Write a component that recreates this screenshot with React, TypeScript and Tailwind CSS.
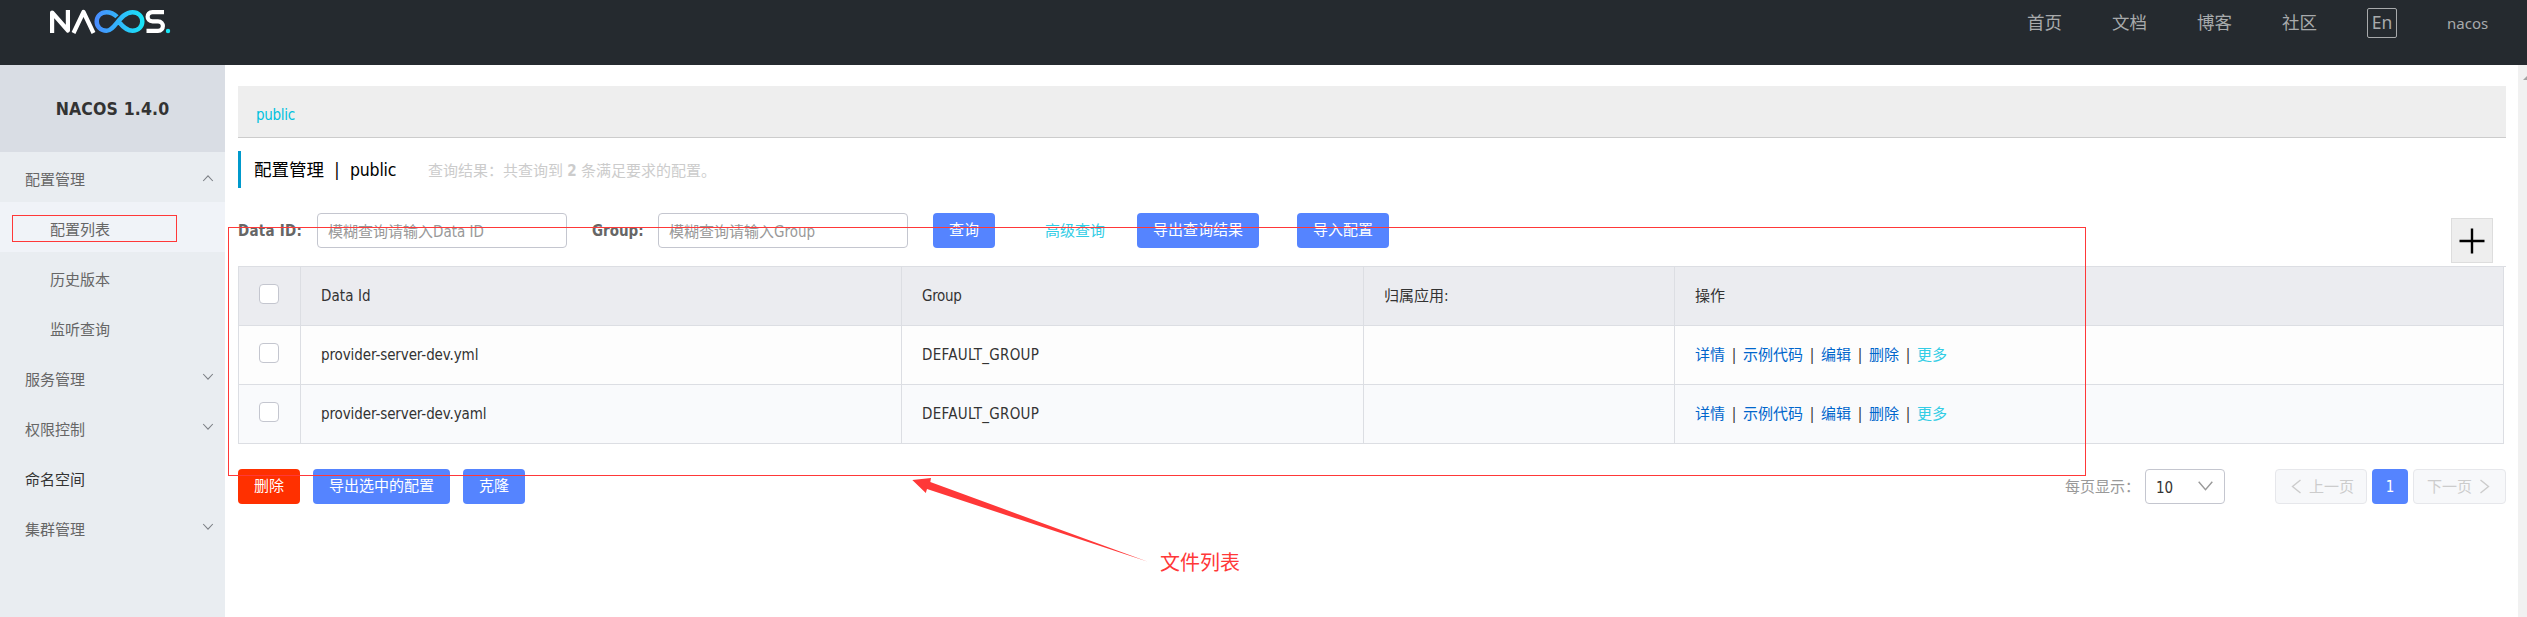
import React from "react";

const latin = "font-['DejaVu_Sans_Condensed','DejaVu_Sans','Noto_Sans_CJK_SC',sans-serif]";

function Chevron({ up = false }: { up?: boolean }) {
  return (
    <svg width="12" height="8" viewBox="0 0 12 8" fill="none" stroke="#7d8086" strokeWidth="1.1" className={up ? "mb-[5px] rotate-180" : "mb-[7px]"}>
      <path d="M1.2 1 L6 6.2 L10.8 1" />
    </svg>
  );
}

function Logo() {
  return (
    <svg width="123" height="25" viewBox="0 0 123 25" fill="none" className="block">
      <defs>
        <linearGradient id="loop" x1="46" y1="0" x2="95" y2="0" gradientUnits="userSpaceOnUse">
          <stop offset="0" stopColor="#4a8bff" />
          <stop offset="1" stopColor="#17e6f7" />
        </linearGradient>
      </defs>
      <g stroke="#fff" strokeWidth="4.2" strokeLinejoin="round">
        <path d="M3.1 24V3.5L18.900 21.500V1" />
        <path d="M24.500 24L34.500 3L44.500 24" />
        <path d="M115 3.100H103.500C97 3.100 97 12.300 103.500 12.300H109C115.500 12.300 115.500 21.900 109 21.900H97.500" />
      </g>
      <path d="M68 7.800C64.500 4.200 61.500 3.200 57.500 3.200C51.500 3.200 47.700 7.500 47.700 12.500C47.700 17.500 51.500 21.800 57.500 21.800C66 21.800 71 3.200 83.500 3.200C89.500 3.200 93.300 7.500 93.300 12.500C93.300 17.500 89.500 21.800 83.500 21.800C78 21.800 74 18 70 13" stroke="url(#loop)" strokeWidth="4.500" />
      <circle cx="119" cy="22" r="2.200" fill="#17e6f7" />
    </svg>
  );
}

const menu = [
  { label: "配置管理", arrow: "up" },
  { label: "配置列表", sub: true, active: true },
  { label: "历史版本", sub: true },
  { label: "监听查询", sub: true },
  { label: "服务管理", arrow: "down" },
  { label: "权限控制", arrow: "down" },
  { label: "命名空间", dark: true },
  { label: "集群管理", arrow: "down" },
];

function Button({ children, className = "bg-[#5584ff]" }: { children: React.ReactNode; className?: string }) {
  return <button className={`h-[35px] shrink-0 rounded-[4px] px-4 text-[15px] leading-[35px] whitespace-nowrap text-white ${className}`}>{children}</button>;
}

function Input({ cjk, text }: { cjk: string; text: string }) {
  return (
    <div className="flex h-[35px] w-[250px] items-center rounded-[4px] border border-[#c4c6cf] bg-white pt-[3px] pl-[10px] whitespace-nowrap text-[#999]">
      {cjk}
      <span>{text}</span>
    </div>
  );
}

function Checkbox() {
  return <div className="-mt-[4px] ml-5 h-5 w-5 rounded-[4px] border border-[#c4c6cf] bg-white" />;
}

const columns = "grid grid-cols-[62px_601px_462px_311px_829px]";
const cell = "flex items-center border-r border-b border-[#dcdee3] pl-5";

function Actions() {
  const bar = <span className="w-[18px] text-center text-[#333]">|</span>;
  return (
    <div className="flex items-center text-[#0066cc]">
      <span>详情</span>{bar}<span>示例代码</span>{bar}<span>编辑</span>{bar}<span>删除</span>{bar}
      <span className="text-[#33cde5]">更多</span>
    </div>
  );
}

export default function App() {
  return (
    <div className={`relative h-[617px] w-[2527px] overflow-hidden bg-white text-[15px] leading-[20px] text-[#333] ${latin}`}>
      <header className="flex h-[65px] items-start justify-between bg-[#252a2f] pt-[9px] pr-[38px] pl-[49px]">
        <Logo />
        <nav className="flex text-[17.5px] leading-[29px] text-[#a8aaac]">
          <span className="mr-[50px]">首页</span>
          <span className="mr-[50px]">文档</span>
          <span className="mr-[50px]">博客</span>
          <span className="mr-[50px]">社区</span>
          <span className="-mt-[1px] mr-[50px] flex h-[30px] w-[30px] items-center justify-center rounded-[2px] border border-[#a8aaac] pb-[2px] font-['Noto_Sans',sans-serif]">En</span>
          <span className="w-[42px] font-['Noto_Sans',sans-serif] text-[15px] leading-[29px]">nacos</span>
        </nav>
      </header>

      <div className="flex h-[552px]">
        <aside className="w-[225px] shrink-0 bg-[#e9edf1]">
          <div className="flex h-[87px] items-center justify-center bg-[#d9dde4] text-[17.5px] font-bold tracking-[0.15px]">NACOS 1.4.0</div>
          {menu.map((m) => (
            <div
              key={m.label}
              className={`flex h-[50px] items-center justify-between pt-[6px] pr-[11px] ${m.sub ? "pl-[50px]" : "pl-[25px]"} ${m.active ? "bg-[#f0f3f8]" : ""} ${m.dark ? "text-[#333]" : "text-[#666]"}`}
            >
              <span>{m.label}</span>
              {m.arrow && <Chevron up={m.arrow === "up"} />}
            </div>
          ))}
        </aside>

        <main className="w-[2293px] shrink-0 pt-[21px] pl-[13px]">
          <div className="flex h-[52px] w-[2268px] items-center border-b border-[#ccc] bg-[#eee] pt-[7px] pl-[18px] tracking-[-0.3px] text-[#00c1de]">public</div>

          <div className="mt-[13px] flex h-[37px] items-center border-l-[3px] border-[#0099cc] pl-[13px]">
            <span className="text-[17.5px] text-black">配置管理</span>
            <span className="w-[26px] text-center text-[17.5px] text-black">|</span>
            <span className="w-[78px] text-[17.5px] tracking-[-0.2px] text-black">public</span>
            <span className="flex pt-[2px] text-[#ccc]">
              <span>查询结果：共查询到</span>
              <span className="w-[18px] text-center font-bold">2</span>
              <span>条满足要求的配置。</span>
            </span>
          </div>

          <div className="mt-[25px] flex h-[35px] items-center">
            <div className="w-[79px] font-bold tracking-[0.25px] text-[#666]">Data ID:</div>
            <Input cjk="模糊查询请输入" text="Data ID" />
            <div className="ml-[25px] w-[66px] font-bold text-[#666]">Group:</div>
            <Input cjk="模糊查询请输入" text="Group" />
            <div className="w-[25px]" />
            <Button>查询</Button>
            <span className="mr-[32px] ml-[50px] text-[#33cde5]">高级查询</span>
            <Button>导出查询结果</Button>
            <div className="w-[38px]" />
            <Button>导入配置</Button>
            <div className="mt-[20px] ml-[1062px] flex h-[45px] w-[42px] items-center justify-center border border-[#ddd] bg-[#eee]">
              <svg width="26" height="26" viewBox="0 0 26 26" stroke="#000" strokeWidth="2.400"><path d="M13 0.500V25.500M0.500 13H25.500" /></svg>
            </div>
          </div>

          <div className="mt-[18px] w-[2268px] border-t border-[#dcdee3]">
            <div className="w-[2266px] border-l border-[#dcdee3]">
              <div className={`${columns} h-[59px] bg-[#ebecf0]`}>
                <div className="border-r border-b border-[#dcdee3] pt-[21px]"><Checkbox /></div>
                <div className={cell}><span className="tracking-[0.1px]">Data Id</span></div>
                <div className={cell}><span className="tracking-[-0.3px]">Group</span></div>
                <div className={cell}>归属应用:</div>
                <div className={cell}>操作</div>
              </div>
              {["provider-server-dev.yml", "provider-server-dev.yaml"].map((name, i) => (
                <div key={name} className={`${columns} h-[59px] ${i === 0 ? "bg-[#fdfdfd]" : "bg-[#f9fafc]"}`}>
                  <div className="border-r border-b border-[#dcdee3] pt-[21px]"><Checkbox /></div>
                  <div className={cell}><span className="tracking-[-0.1px]">{name}</span></div>
                  <div className={cell}><span className="tracking-[0.3px]">DEFAULT_GROUP</span></div>
                  <div className={cell} />
                  <div className={cell}><Actions /></div>
                </div>
              ))}
            </div>
          </div>

          <div className="mt-[25px] flex h-[35px] w-[2268px] items-center">
            <Button className="mr-[13px] bg-[#ff3000]">删除</Button>
            <Button>导出选中的配置</Button>
            <div className="w-[13px]" />
            <Button>克隆</Button>
            <div className="ml-auto w-[80px] text-[#999]">每页显示：</div>
            <div className="flex h-[35px] w-[80px] items-center justify-between rounded-[4px] border border-[#c4c6cf] pr-[11px] pl-[10px]">
              <span className="pt-[3px]">10</span>
              <svg width="15" height="10" viewBox="0 0 15 10" fill="none" stroke="#999" strokeWidth="1.400" className="-mt-[1px]"><path d="M0.700 0.700L7.500 8.700L14.300 0.700" /></svg>
            </div>
            <div className="ml-[50px] flex h-[35px] w-[92px] items-center rounded-[4px] border border-[#e6e7eb] bg-[#f7f8fa] pl-[15px] text-[#ccc]">
              <svg width="11" height="15" viewBox="0 0 11 15" fill="none" stroke="#ccc" strokeWidth="1.400" className="mr-[7px]"><path d="M9.500 1L1.500 7.500L9.500 14" /></svg>
              上一页
            </div>
            <div className="mx-[5px] flex h-[35px] w-[36px] items-center justify-center rounded-[4px] bg-[#5584ff] text-white">1</div>
            <div className="flex h-[35px] w-[93px] items-center rounded-[4px] border border-[#e6e7eb] bg-[#f7f8fa] pl-[13px] text-[#ccc]">
              下一页
              <svg width="11" height="15" viewBox="0 0 11 15" fill="none" stroke="#ccc" strokeWidth="1.400" className="ml-[7px]"><path d="M1.500 1L9.500 7.500L1.500 14" /></svg>
            </div>
          </div>
        </main>

        <div className="w-[9px] shrink-0 overflow-hidden bg-[#f1f1f1] pt-[11px] pl-[5px]">
          <svg width="8" height="4" viewBox="0 0 8 4" fill="#a3a3a3"><path d="M0 4L4 0L8 4Z" /></svg>
        </div>
      </div>

      <div className="absolute top-[215px] left-[12px] h-[27px] w-[165px] border border-[#ff3838]" />
      <div className="absolute top-[227px] left-[228px] h-[249px] w-[1858px] border border-[#ff3838]" />
      <svg className="absolute top-[476px] left-[910px]" width="240" height="90" viewBox="910 476 240 90" fill="#ff3838">
        <path d="M912.300 480L931 478L930.300 482L1148 561.800L927 489L925.800 493Z" />
      </svg>
      <div className="absolute top-[550px] left-[1160px] text-[20px] leading-[26px] text-[#ff3838]">文件列表</div>
    </div>
  );
}
